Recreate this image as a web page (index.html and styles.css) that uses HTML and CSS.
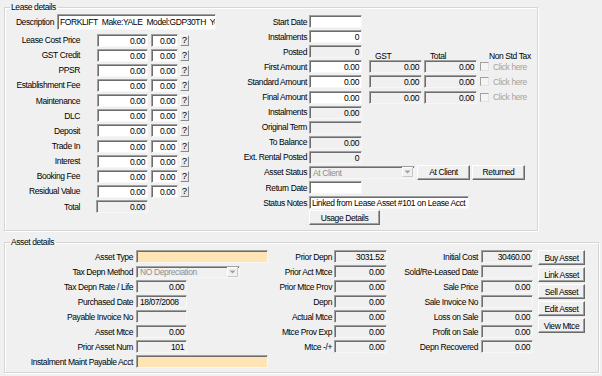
FILE: index.html
```html
<!DOCTYPE html>
<html>
<head>
<meta charset="utf-8">
<link rel="stylesheet" href="styles.css">
</head>
<body>
<fieldset class="group lease">
  <legend>Lease details</legend>
  <div class="lease-body">
    <div class="lcol">
      <div class="desc-row">
        <span class="lbl desc-lbl">Description</span>
        <span class="tb white desc">FORKLIFT&nbsp; Make:YALE&nbsp; Model:GDP30TH&nbsp; Year:2008</span>
      </div>
      <div class="lrows">
        <div class="lrow"><span class="lbl l1">Lease Cost Price</span><span class="tb white num a">0.00</span><span class="tb white num b">0.00</span><span class="qbtn">?</span></div>
        <div class="lrow"><span class="lbl l1">GST Credit</span><span class="tb white num a">0.00</span><span class="tb white num b">0.00</span><span class="qbtn">?</span></div>
        <div class="lrow"><span class="lbl l1">PPSR</span><span class="tb white num a">0.00</span><span class="tb white num b">0.00</span><span class="qbtn">?</span></div>
        <div class="lrow"><span class="lbl l1">Establishment Fee</span><span class="tb white num a">0.00</span><span class="tb white num b">0.00</span><span class="qbtn">?</span></div>
        <div class="lrow"><span class="lbl l1">Maintenance</span><span class="tb white num a">0.00</span><span class="tb white num b">0.00</span><span class="qbtn">?</span></div>
        <div class="lrow"><span class="lbl l1">DLC</span><span class="tb white num a">0.00</span><span class="tb white num b">0.00</span><span class="qbtn">?</span></div>
        <div class="lrow"><span class="lbl l1">Deposit</span><span class="tb white num a">0.00</span><span class="tb white num b">0.00</span><span class="qbtn">?</span></div>
        <div class="lrow"><span class="lbl l1">Trade In</span><span class="tb white num a">0.00</span><span class="tb white num b">0.00</span><span class="qbtn">?</span></div>
        <div class="lrow"><span class="lbl l1">Interest</span><span class="tb white num a">0.00</span><span class="tb white num b">0.00</span><span class="qbtn">?</span></div>
        <div class="lrow"><span class="lbl l1">Booking Fee</span><span class="tb white num a">0.00</span><span class="tb white num b">0.00</span><span class="qbtn">?</span></div>
        <div class="lrow"><span class="lbl l1">Residual Value</span><span class="tb white num a">0.00</span><span class="tb white num b">0.00</span><span class="qbtn">?</span></div>
        <div class="lrow"><span class="lbl l1">Total</span><span class="tb num a total">0.00</span></div>
      </div>
    </div>
    <div class="mcol">
      <div class="mrow"><span class="lbl l2">Start Date</span><span class="tb white m"></span></div>
      <div class="mrow"><span class="lbl l2">Instalments</span><span class="tb white num m">0</span></div>
      <div class="mrow"><span class="lbl l2">Posted</span><span class="tb num m">0</span><span class="hdr h-gst">GST</span><span class="hdr h-total">Total</span><span class="hdr h-nst">Non Std Tax</span></div>
      <div class="mrow"><span class="lbl l2">First Amount</span><span class="tb white num m">0.00</span><span class="tb num m gst">0.00</span><span class="tb num m tot">0.00</span><span class="chk"></span><span class="dis">Click here</span></div>
      <div class="mrow"><span class="lbl l2">Standard Amount</span><span class="tb white num m">0.00</span><span class="tb num m gst">0.00</span><span class="tb num m tot">0.00</span><span class="chk"></span><span class="dis">Click here</span></div>
      <div class="mrow"><span class="lbl l2">Final Amount</span><span class="tb white num m">0.00</span><span class="tb num m gst">0.00</span><span class="tb num m tot">0.00</span><span class="chk"></span><span class="dis">Click here</span></div>
      <div class="mrow"><span class="lbl l2">Instalments</span><span class="tb num m">0.00</span></div>
      <div class="mrow"><span class="lbl l2">Original Term</span><span class="tb num m"></span></div>
      <div class="mrow"><span class="lbl l2">To Balance</span><span class="tb num m">0.00</span></div>
      <div class="mrow"><span class="lbl l2">Ext. Rental Posted</span><span class="tb num m">0</span></div>
      <div class="mrow"><span class="lbl l2">Asset Status</span><span class="combo status"><span class="ctext">At Client</span><span class="carrow"><svg width="7" height="4" viewBox="0 0 7 4"><path d="M0.5 0.5 L6.5 0.5 L3.5 3.5 Z" fill="#a0a0a0"/></svg></span></span><span class="btn sbtn">At Client</span><span class="btn sbtn">Returned</span></div>
      <div class="mrow"><span class="lbl l2">Return Date</span><span class="tb white m"></span></div>
      <div class="mrow"><span class="lbl l2">Status Notes</span><span class="tb white notes">Linked from Lease Asset #101 on Lease Acct</span></div>
      <div class="mrow"><span class="lbl l2"></span><span class="btn usage">Usage Details</span></div>
    </div>
  </div>
</fieldset>

<fieldset class="group asset">
  <legend>Asset details</legend>
  <div class="asset-body">
    <div class="acol1">
      <div class="arow"><span class="lbl a1">Asset Type</span><span class="tb peach wide"></span></div>
      <div class="arow"><span class="lbl a1">Tax Depn Method</span><span class="combo depn"><span class="ctext">NO Depreciation</span><span class="carrow"><svg width="7" height="4" viewBox="0 0 7 4"><path d="M0.5 0.5 L6.5 0.5 L3.5 3.5 Z" fill="#a0a0a0"/></svg></span></span></div>
      <div class="arow"><span class="lbl a1">Tax Depn Rate / Life</span><span class="tb num s">0.00</span></div>
      <div class="arow"><span class="lbl a1">Purchased Date</span><span class="tb s">18/07/2008</span></div>
      <div class="arow"><span class="lbl a1">Payable Invoice No</span><span class="tb s"></span></div>
      <div class="arow"><span class="lbl a1">Asset Mtce</span><span class="tb num s">0.00</span></div>
      <div class="arow"><span class="lbl a1">Prior Asset Num</span><span class="tb num s">101</span></div>
      <div class="arow"><span class="lbl a1">Instalment Maint Payable Acct</span><span class="tb peach wide"></span></div>
    </div>
    <div class="acol2">
      <div class="arow"><span class="lbl a2">Prior Depn</span><span class="tb num m">3031.52</span></div>
      <div class="arow"><span class="lbl a2">Prior Act Mtce</span><span class="tb num m">0.00</span></div>
      <div class="arow"><span class="lbl a2">Prior Mtce Prov</span><span class="tb num m">0.00</span></div>
      <div class="arow"><span class="lbl a2">Depn</span><span class="tb num m">0.00</span></div>
      <div class="arow"><span class="lbl a2">Actual Mtce</span><span class="tb num m">0.00</span></div>
      <div class="arow"><span class="lbl a2">Mtce Prov Exp</span><span class="tb num m">0.00</span></div>
      <div class="arow"><span class="lbl a2">Mtce -/+</span><span class="tb num m">0.00</span></div>
    </div>
    <div class="acol3">
      <div class="arow"><span class="lbl a3">Initial Cost</span><span class="tb num r">30460.00</span></div>
      <div class="arow"><span class="lbl a3">Sold/Re-Leased Date</span><span class="tb num r"></span></div>
      <div class="arow"><span class="lbl a3">Sale Price</span><span class="tb num r">0.00</span></div>
      <div class="arow"><span class="lbl a3">Sale Invoice No</span><span class="tb num r"></span></div>
      <div class="arow"><span class="lbl a3">Loss on Sale</span><span class="tb num r">0.00</span></div>
      <div class="arow"><span class="lbl a3">Profit on Sale</span><span class="tb num r">0.00</span></div>
      <div class="arow"><span class="lbl a3">Depn Recovered</span><span class="tb num r">0.00</span></div>
    </div>
    <div class="acol4">
      <span class="btn abtn">Buy Asset</span>
      <span class="btn abtn">Link Asset</span>
      <span class="btn abtn">Sell Asset</span>
      <span class="btn abtn">Edit Asset</span>
      <span class="btn abtn">View Mtce</span>
    </div>
  </div>
</fieldset>
</body>
</html>
```

FILE: styles.css
```css
* { box-sizing: border-box; }

html, body {
  margin: 0;
  padding: 0;
  background: #f0f0f0;
}

body {
  width: 602px;
  height: 376px;
  overflow: hidden;
  font-family: "Liberation Sans", Arial, sans-serif;
  font-size: 8.5px;
  letter-spacing: -0.4px;
  line-height: 10px;
  color: #000;
  padding-left: 4px;
}

.group {
  margin: 0;
  padding: 0;
  border: 1px solid #d5d5d5;
  box-shadow: inset 1px 1px 0 #fff, 1px 1px 0 #fff;
}

.group legend {
  padding: 0 2px 0 1px;
  margin-left: 5px;
  height: 10px;
  line-height: 10px;
}

.lease {
  margin-top: 2px;
  width: 534px;
  height: 229px;
}

.asset {
  margin-top: 6px;
  width: 595px;
  height: 136px;
}

.lbl {
  display: block;
  flex: none;
  text-align: right;
  white-space: nowrap;
}

/* text boxes */
.tb {
  display: block;
  flex: none;
  height: 13px;
  border: 1px solid;
  border-color: #a0a0a0 #f7f7f7 #f7f7f7 #a0a0a0;
  box-shadow: inset 1px 1px 0 #6d6d6d;
  background: #f0f0f0;
  padding: 1px 2px 0 3px;
  line-height: 10px;
  white-space: nowrap;
  overflow: hidden;
}
.tb.white { background: #fff; }
.tb.peach { background: #ffe4b5; }
.tb.num { text-align: right; }

/* lease body */
.lease-body {
  display: flex;
}

.lcol {
  width: 225px;
  flex: none;
}

.desc-row {
  display: flex;
  align-items: center;
  margin-top: 2px;
  height: 16px;
}
.desc-lbl { width: 49px; }
.tb.desc {
  margin-left: 3px;
  width: 159px;
  height: 16px;
  padding-top: 2px;
  padding-left: 2px;
  text-align: left;
}

.lrows {
  margin-top: 2.5px;
}
.lrow {
  display: flex;
  align-items: center;
  height: 15.15px;
}
.l1 { width: 75px; }
.tb.a { margin-left: 17px; width: 51px; }
.tb.b { margin-left: 3px; width: 27px; }
.tb.total { margin-left: 16px; width: 52px; }

.qbtn {
  display: block;
  flex: none;
  margin-left: 2px;
  width: 9px;
  height: 11px;
  border: 1px solid;
  border-color: #fff #8a8a8a #8a8a8a #fff;
  background: #e8e8e8;
  font-size: 9px;
  letter-spacing: 0;
  line-height: 9px;
  text-align: center;
}

.mcol {
  width: 307px;
  flex: none;
  padding-top: 2px;
}

.mrow {
  display: flex;
  align-items: center;
  height: 15.1px;
}
.l2 { width: 77px; }
.tb.m { margin-left: 2px; width: 53px; }
.tb.gst { margin-left: 7px; }
.tb.tot { margin-left: 2px; }

.hdr {
  display: block;
  flex: none;
  align-self: flex-end;
  margin-bottom: -2px;
  white-space: nowrap;
}
.h-gst { margin-left: 13px; width: 55px; }
.h-total { width: 59px; }
.h-nst { width: 48px; }

.chk {
  display: block;
  flex: none;
  margin-left: 3px;
  width: 9px;
  height: 9px;
  border: 1px solid;
  border-color: #a0a0a0 #e3e3e3 #e3e3e3 #a0a0a0;
  background: #f4f4f4;
}
.dis {
  display: block;
  flex: none;
  margin-left: 4px;
  color: #a3a3a3;
  white-space: nowrap;
}

.combo {
  display: flex;
  flex: none;
  align-items: center;
  justify-content: space-between;
  height: 13px;
  border: 1px solid;
  border-color: #a0a0a0 #f7f7f7 #f7f7f7 #a0a0a0;
  box-shadow: inset 1px 1px 0 #6d6d6d;
  background: #f0f0f0;
  padding: 1px 1px 0 3px;
  color: #8f8f8f;
}
.combo.status { margin-left: 2px; width: 106px; }
.combo.depn { margin-left: 3px; width: 104px; height: 12px; }
.ctext { white-space: nowrap; }
.carrow {
  display: flex;
  align-items: center;
  justify-content: center;
  width: 11px;
  height: 10px;
  border: 1px solid;
  border-color: #fff #c8c8c8 #c8c8c8 #fff;
  background: #f0f0f0;
  margin-top: -1px;
}

.btn {
  display: flex;
  flex: none;
  align-items: center;
  justify-content: center;
  height: 15px;
  border: 1px solid;
  border-color: #fff #696969 #696969 #fff;
  box-shadow: inset -1px -1px 0 #a0a0a0;
  background: #f0f0f0;
  white-space: nowrap;
}
.sbtn { margin-left: 2px; width: 53px; }
.usage { margin-left: 2px; width: 71px; }

.tb.notes { margin-left: 2px; width: 160px; padding-left: 2px; }

/* asset body */
.asset-body {
  display: flex;
  padding-top: 2px;
}

.arow {
  display: flex;
  align-items: center;
  height: 15px;
}

.acol1 { width: 263px; flex: none; }
.a1 { width: 128px; }
.tb.wide { margin-left: 3px; width: 132px; }
.tb.s { margin-left: 3px; width: 51px; }

.acol2 { width: 119px; flex: none; }
.a2 { width: 64px; }

.acol3 { width: 146px; flex: none; }
.a3 { width: 91px; }
.tb.r { margin-left: 3px; width: 52px; }

.acol4 {
  display: flex;
  flex-direction: column;
  gap: 2px;
  margin-left: 5px;
  padding-top: 1px;
}
.abtn { width: 47px; }
```
